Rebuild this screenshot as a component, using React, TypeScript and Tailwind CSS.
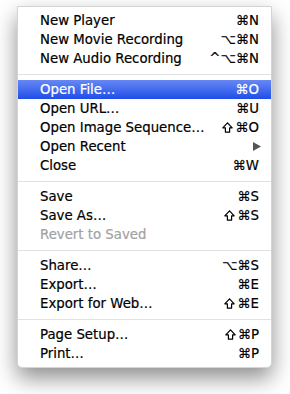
import React from 'react';

type Item = { label: string; keys?: string; disabled?: boolean; active?: boolean; submenu?: boolean };

const groups: Item[][] = [
  [
    { label: 'New Player', keys: '⌘N' },
    { label: 'New Movie Recording', keys: '⌥⌘N' },
    { label: 'New Audio Recording', keys: '^⌥⌘N' },
  ],
  [
    { label: 'Open File…', keys: '⌘O', active: true },
    { label: 'Open URL…', keys: '⌘U' },
    { label: 'Open Image Sequence…', keys: '⇧⌘O' },
    { label: 'Open Recent', submenu: true },
    { label: 'Close', keys: '⌘W' },
  ],
  [
    { label: 'Save', keys: '⌘S' },
    { label: 'Save As…', keys: '⇧⌘S' },
    { label: 'Revert to Saved', disabled: true },
  ],
  [
    { label: 'Share…', keys: '⌥⌘S' },
    { label: 'Export…', keys: '⌘E' },
    { label: 'Export for Web…', keys: '⇧⌘E' },
  ],
  [
    { label: 'Page Setup…', keys: '⇧⌘P' },
    { label: 'Print…', keys: '⌘P' },
  ],
];

// shift key glyph, drawn wider than the DejaVu one
function Shift() {
  return (
    <svg width="11" height="11" viewBox="0 0 11 11" className="mr-[2px] inline-block align-[-1px]">
      <path d="M5.5 0.8 L10.2 5.8 H7.6 V10.2 H3.4 V5.8 H0.8 Z" fill="none" stroke="currentColor" strokeWidth="1.2" strokeLinejoin="round" />
    </svg>
  );
}

function Keys({ keys }: { keys: string }) {
  const shift = keys.startsWith('⇧');
  return (
    <span className="flex items-center">
      {shift && <Shift />}
      {shift ? keys.slice(1) : keys}
    </span>
  );
}

function Row({ item }: { item: Item }) {
  const color = item.active
    ? 'bg-gradient-to-b from-[#6787f4] to-[#1f4ce8] text-white'
    : item.disabled
      ? 'text-[#a2a2a2]'
      : 'text-black';
  return (
    <div className={`flex h-[19px] items-center justify-between pl-[22px] pr-[12px] ${color}`}>
      <span>{item.label}</span>
      {item.keys && <Keys keys={item.keys} />}
      {item.submenu && (
        <svg width="8" height="9" viewBox="0 0 8 9" className="mr-[-2px]">
          <path d="M0 0 L8 4.5 L0 9 Z" fill="#555" />
        </svg>
      )}
    </div>
  );
}

export default function App() {
  return (
    <div className="h-[394px] w-[290px] bg-white pl-[17px] pt-[6px] font-['DejaVu_Sans',sans-serif] text-[13.3px] [-webkit-text-stroke:0.2px]">
      <div className="w-[255px] rounded-b-[5px] border border-[#d4d4d4] bg-white pb-[4px] pt-[4px] shadow-[0_10px_22px_rgba(0,0,0,0.45)]">
        {groups.map((g, i) => (
          <div key={i}>
            {i > 0 && (
              <div className="flex h-[12px] items-center">
                <div className="h-px w-full bg-[#e2e2e2]" />
              </div>
            )}
            {g.map((item) => (
              <Row key={item.label} item={item} />
            ))}
          </div>
        ))}
      </div>
    </div>
  );
}
